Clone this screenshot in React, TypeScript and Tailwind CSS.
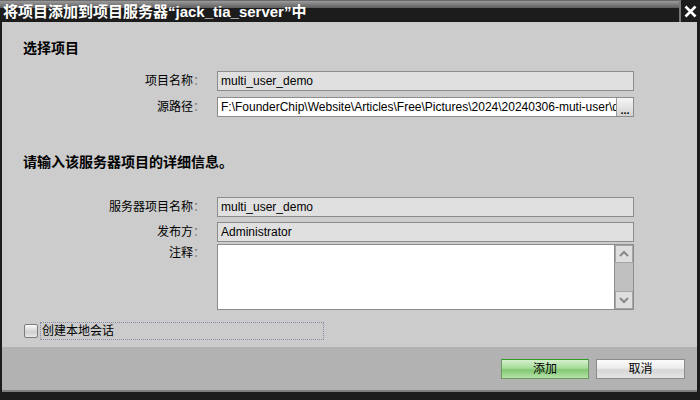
import React from "react";

const FONT = '"Liberation Sans", "Noto Sans CJK SC", sans-serif';

function Row({ label, children, top = false }: { label: string; children: React.ReactNode; top?: boolean }) {
  return (
    <div className={`flex ${top ? "items-start" : "items-center"}`}>
      <div className={`w-[203px] text-right text-[12px] leading-[16px] text-black ${top ? "pt-[1px]" : ""}`}>
        {label}
        <span className="text-[#777]">：</span>
      </div>
      <div className="ml-[12px] w-[417px]">{children}</div>
    </div>
  );
}

function ReadOnly({ value }: { value: string }) {
  return (
    <div className="h-[20px] border border-[#8c8c8c] bg-[#e0e0e0] pl-[3px] text-[12px] leading-[18px] text-black whitespace-nowrap overflow-hidden">
      {value}
    </div>
  );
}

function Chevron({ up }: { up?: boolean }) {
  return (
    <svg width="12" height="8" viewBox="0 0 12 8">
      <path d={up ? "M2 6 L6 2 L10 6" : "M2 2 L6 6 L10 2"} fill="none" stroke="#888" strokeWidth="2" />
    </svg>
  );
}

export default function App() {
  return (
    <div className="w-[700px] h-[400px] flex flex-col bg-[#1c1c1c] overflow-hidden" style={{ fontFamily: FONT }}>
      {/* title bar */}
      <div className="h-[22px] flex shrink-0">
        <div className="flex-1 flex items-center pl-[3px] bg-[linear-gradient(to_bottom,#3a3a3a_0px,#9a9a9a_1px,#5e5e5e_8px,#1c1c1c_8px)]">
          <span className="text-white font-bold text-[15px] leading-none whitespace-nowrap">
            将项目添加到项目服务器“jack_tia_server”中
          </span>
        </div>
        <div className="w-[2px] bg-[#7a7a7a]" />
        <div className="w-[19px] flex items-center justify-center bg-[#1c1c1c]">
          <svg width="13" height="13" viewBox="0 0 13 13">
            <path d="M1.5 1.5 L11.5 11.5 M11.5 1.5 L1.5 11.5" stroke="#fff" strokeWidth="2.6" />
          </svg>
        </div>
      </div>

      {/* body */}
      <div className="ml-[2px] mr-[3px] flex flex-col">
        <div className="h-[325px] bg-[#cccccc] pt-[16px] flex flex-col">
          <div className="pl-[21px] text-[14px] font-bold leading-[20px] text-black">选择项目</div>

          <div className="mt-[13px]">
            <Row label="项目名称">
              <ReadOnly value="multi_user_demo" />
            </Row>
          </div>
          <div className="mt-[6px]">
            <Row label="源路径">
              <div className="h-[20px] flex border border-[#8c8c8c] bg-white">
                <div className="flex-1 pl-[3px] text-[12px] leading-[18px] text-black whitespace-nowrap overflow-hidden">
                  F:\FounderChip\Website\Articles\Free\Pictures\2024\20240306-muti-user\demo
                </div>
                <div className="w-[17px] border-l border-[#9a9a9a] bg-[linear-gradient(to_bottom,#f6f6f6,#d2d2d2)] flex items-end justify-center">
                  <span className="text-[11px] font-bold leading-[12px] text-black">...</span>
                </div>
              </div>
            </Row>
          </div>

          <div className="mt-[35px] pl-[21px] text-[14px] font-bold leading-[20px] text-black">
            请输入该服务器项目的详细信息。
          </div>

          <div className="mt-[25px]">
            <Row label="服务器项目名称">
              <ReadOnly value="multi_user_demo" />
            </Row>
          </div>
          <div className="mt-[5px]">
            <Row label="发布方">
              <ReadOnly value="Administrator" />
            </Row>
          </div>
          <div className="mt-[2px]">
            <Row label="注释" top>
              <div className="h-[66px] flex border border-[#8c8c8c] bg-white">
                <div className="flex-1" />
                <div className="w-[19px] flex flex-col border-l border-[#8c8c8c] bg-[#c0c0c0]">
                  <div className="h-[18px] border border-[#a6a6a6] bg-[#dedede] flex items-center justify-center">
                    <Chevron up />
                  </div>
                  <div className="flex-1" />
                  <div className="h-[18px] border border-[#a6a6a6] bg-[#dedede] flex items-center justify-center">
                    <Chevron />
                  </div>
                </div>
              </div>
            </Row>
          </div>

          <div className="mt-[12px] h-[18px] flex items-center pl-[22px]">
            <div className="w-[14px] h-[14px] rounded-[2px] border border-[#7c7c7c] bg-[linear-gradient(to_bottom,#fafafa,#cfcfcf_60%,#e8e8e8)]" />
            <div className="ml-[2px] w-[284px] h-[18px] border border-dotted border-[#8a8aa8] flex items-center pl-[1px]">
              <span className="text-[12px] leading-none text-black">创建本地会话</span>
            </div>
          </div>
        </div>

        {/* footer */}
        <div className="h-[43px] bg-[#b2b2b2] flex justify-end items-start pt-[12px] pr-[12px] gap-[7px]">
          <div className="w-[88px] h-[20px] border border-[#6a9a60] border-t-[#2f9a22] bg-[linear-gradient(to_bottom,#d6f0cf,#a6dc98_45%,#84c873_55%,#b6e2a8)] flex items-center justify-center text-[12px] text-black">
            添加
          </div>
          <div className="w-[89px] h-[20px] border border-[#8c8c8c] bg-[linear-gradient(to_bottom,#fbfbfb,#ececec_45%,#d6d6d6_55%,#e4e4e4)] flex items-center justify-center text-[12px] text-black">
            取消
          </div>
        </div>
        <div className="h-[2px] bg-[#7e7e7e]" />
      </div>
    </div>
  );
}
